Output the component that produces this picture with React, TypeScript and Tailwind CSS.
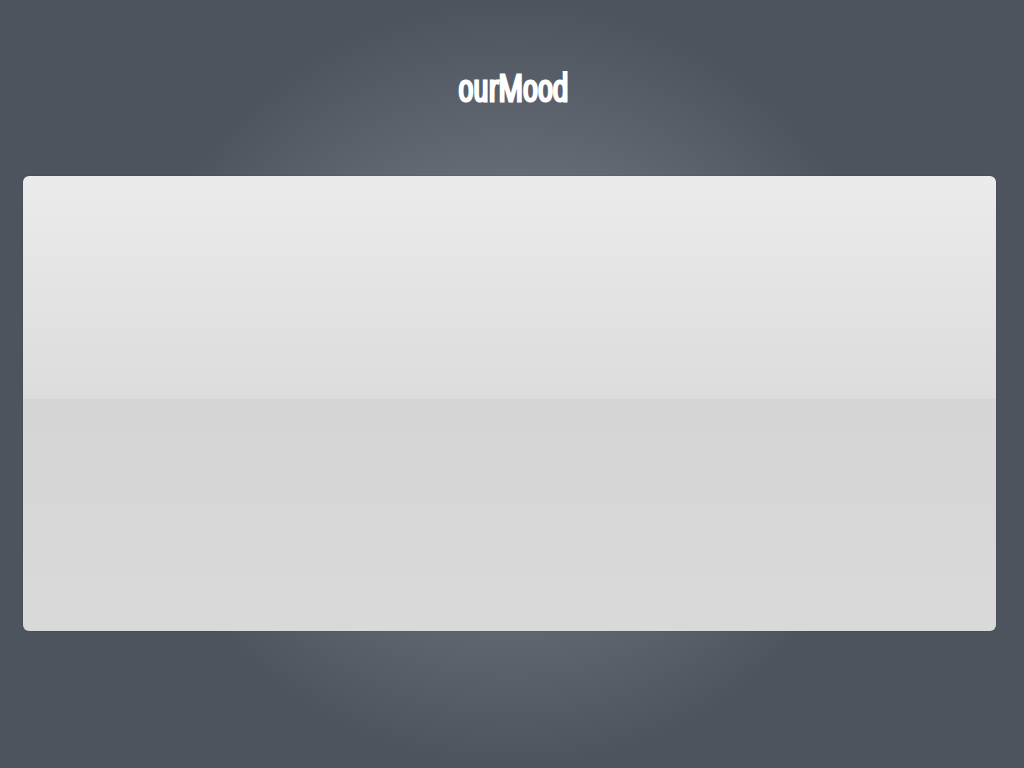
export default function App() {
  return (
    <div className="flex min-h-screen flex-col bg-[radial-gradient(circle_closest-side,#82868e,#4d545e)] pt-14 pr-7 pb-[137px] pl-[23px]">
      <header className="mb-14 flex h-16 items-center justify-center">
        <h1 className="pl-2 font-['Open_Sans_Condensed_Light','Open_Sans_Condensed','Roboto_Condensed',sans-serif] text-4xl font-light text-white [-webkit-text-stroke:3px_white]">
          ourMood
        </h1>
      </header>
      <main className="flex-1 rounded-md bg-[linear-gradient(to_bottom,#ebebeb_0%,#dcdcdc_49%,#d5d5d5_49%,#d9d9d9_100%)] shadow-[0_0_1px_rgba(0,0,0,0.5)]" />
    </div>
  );
}
